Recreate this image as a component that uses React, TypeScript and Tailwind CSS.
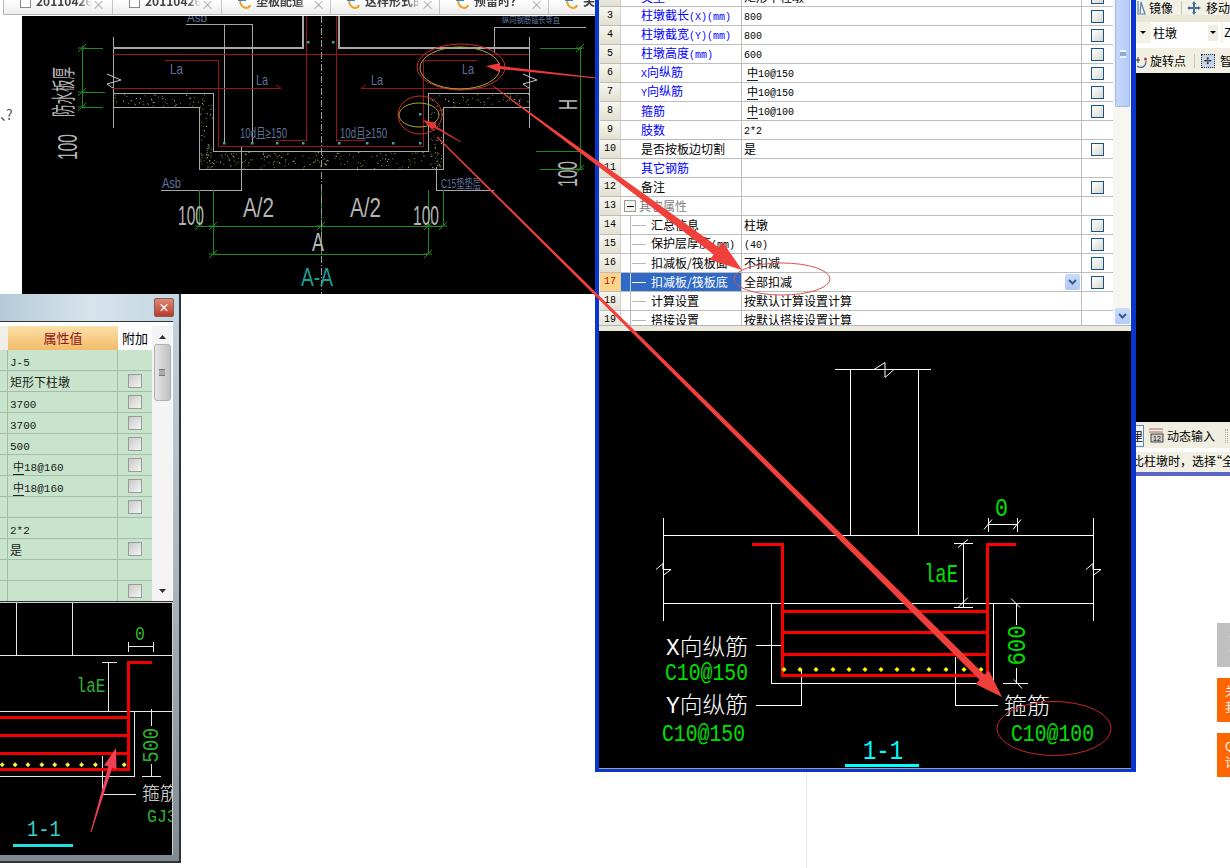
import React from "react";

const CJK = "font-['Noto_Sans_CJK_SC','Noto_Sans',sans-serif]";

function arrow(x1: number, y1: number, x2: number, y2: number, w1: number, w2: number, hl: number, hw: number) {
  const len = Math.hypot(x2 - x1, y2 - y1);
  const ux = (x2 - x1) / len;
  const uy = (y2 - y1) / len;
  const nx = -uy;
  const ny = ux;
  const bx = x2 - ux * hl;
  const by = y2 - uy * hl;
  const p = (x: number, y: number) => `${x.toFixed(1)},${y.toFixed(1)}`;
  return [
    p(x1 + (nx * w1) / 2, y1 + (ny * w1) / 2),
    p(bx + (nx * w2) / 2, by + (ny * w2) / 2),
    p(bx + (nx * hw) / 2, by + (ny * hw) / 2),
    p(x2, y2),
    p(bx - (nx * hw) / 2, by - (ny * hw) / 2),
    p(bx - (nx * w2) / 2, by - (ny * w2) / 2),
    p(x1 - (nx * w1) / 2, y1 - (ny * w1) / 2),
  ].join(" ");
}

function speckles() {
  const areas = [
    [113, 94, 86, 12],
    [200, 94, 12, 75],
    [200, 152, 243, 16],
    [429, 94, 13, 75],
    [443, 94, 86, 12],
  ];
  const out: [number, number][] = [];
  let s = 17;
  const r = () => {
    s = (s * 16807) % 2147483647;
    return (s % 1000) / 1000;
  };
  areas.forEach(([x, y, w, h]) => {
    const n = Math.round((w * h) / 22);
    for (let i = 0; i < n; i++) out.push([x + r() * w, y + r() * h]);
  });
  return out;
}

const T = ({ x, y, s, w, c, f, tr, children }: { x: number; y: number; s: number; w?: number; c: string; f?: "sans" | "mono" | "cjk"; tr?: string; children: React.ReactNode }) => (
  <text
    x={x}
    y={y}
    fontSize={s}
    fill={c}
    transform={tr}
    textLength={w}
    lengthAdjust={w ? "spacingAndGlyphs" : undefined}
    fontWeight={f === "cjk" ? 300 : 400}
    fontFamily={
      f === "mono"
        ? "'Liberation Mono','Noto Sans CJK SC',monospace"
        : f === "sans"
          ? "'Liberation Sans','Noto Sans CJK SC',sans-serif"
          : "'Liberation Mono','Noto Sans CJK SC',serif"
    }
  >
    {children}
  </text>
);

function Tick({ x, y, c }: { x: number; y: number; c: string }) {
  return <path d={`M${x - 4} ${y + 4}L${x + 4} ${y - 4}M${x - 4} ${y}H${x + 4}`} stroke={c} fill="none" />;
}

function TopDrawing() {
  const gray = "#a8a8a8";
  const dred = "#98161a";
  const green = "#1d8a1d";
  const slate = "#5f7098";
  const light = "#b4b4b4";
  return (
    <svg className="block w-full h-full" viewBox="22 16 574 278">
      <g opacity="0.95">
        {speckles().map(([x, y], i) => (
          <rect key={i} x={x} y={y} width="1" height="1" fill={i % 4 ? "#8c8c34" : "#d8d8d8"} />
        ))}
      </g>
      <g fill="none" stroke={gray} shapeRendering="crispEdges">
        <path d="M186 24H252V143M224.5 24V143" />
        <path d="M303 16V48H113M339 16V48H529" strokeWidth="1.5" />
        <path d="M113 37V128M529 37V128" />
        <path d="M113 93H213V151H428V93H529M113 107H199V169H443V107H529" />
        <path d="M161 190H241V147M494 190H436V167" />
        <path d="M586 27H494V53" />
      </g>
      <path d="M107 74L121 80L107 84L113 88M523 74L537 80L523 84L529 88" fill="none" stroke="#c8c8c8" />
      <g fill="none" stroke={dred} shapeRendering="crispEdges">
        <path d="M113 54H529" />
        <path d="M306 16V140H276M336 16V140H365" />
        <path d="M165 60H218V146H423V60H477" />
        <path d="M113 88H281M361 88H529" />
      </g>
      <path d="M276 85L281 88M366 85L361 88" stroke={dred} fill="none" />
      <g stroke={green} fill="none" shapeRendering="crispEdges">
        <path d="M82 46V108M82 48H103M82 92H105M82 107H103" />
        <path d="M580 48V170M540 48H582M536 151H580M540 169H582" />
        <path d="M199 190V226M213 190V254M321 189V254M428 190V254M443 190V226M199 226H443M213 254H428" />
      </g>
      {[[82, 48], [82, 92], [82, 107], [580, 48], [580, 169], [199, 226], [213, 226], [321, 226], [428, 226], [443, 226], [213, 254], [428, 254]].map(([x, y], i) => (
        <Tick key={i} x={x} y={y} c={green} />
      ))}
      <path d="M321 16V294" stroke="#9a9a9a" strokeDasharray="7 2 1 2" fill="none" shapeRendering="crispEdges" />
      {[[224, 143], [252, 143], [277, 143], [303, 143], [339, 143], [367, 143], [393, 143], [420, 143], [308, 42], [333, 42], [420, 114]].map(([x, y], i) => (
        <rect key={i} x={x - 1} y={y - 1} width="2.5" height="2.5" fill="#35a8a8" />
      ))}
      <T f="sans" x={187} y={22} s={12} w={20} c={slate}>Asb</T>
      <T f="sans" x={162} y={188} s={15} w={19} c={slate}>Asb</T>
      <T f="sans" x={170} y={74} s={15} w={13} c={slate}>La</T>
      <T f="sans" x={256} y={85} s={15} w={12} c={slate}>La</T>
      <T f="sans" x={371} y={85} s={15} w={12} c={slate}>La</T>
      <T f="sans" x={462} y={74} s={15} w={12} c={slate}>La</T>
      <T f="sans" x={240} y={138} s={14} w={47} c={slate}>10d且≥150</T>
      <T f="sans" x={340} y={138} s={14} w={47} c={slate}>10d且≥150</T>
      <T f="sans" x={441} y={188} s={13} w={40} c={slate}>C15垫垫层</T>
      <T f="sans" x={502} y={23} s={9} w={58} c={slate}>纵向钢筋锚长等直</T>
      <T f="sans" x={178} y={225} s={28} w={26} c={light}>100</T>
      <T f="sans" x={413} y={225} s={28} w={26} c={light}>100</T>
      <T f="sans" x={243} y={217} s={28} w={31} c={light}>A/2</T>
      <T f="sans" x={350} y={217} s={28} w={31} c={light}>A/2</T>
      <T f="sans" x={312} y={251} s={26} w={12} c={light}>A</T>
      <T f="sans" x={301} y={286} s={25} w={32} c="#1f9d93">A-A</T>
      <T f="sans" x={0} y={0} s={28} w={26} c={light} tr="translate(77,160) rotate(-90)">100</T>
      <T f="sans" x={0} y={0} s={24} w={50} c={light} tr="translate(72,117) rotate(-90)">防水板厚</T>
      <T f="sans" x={0} y={0} s={26} w={11} c={light} tr="translate(577,110) rotate(-90)">H</T>
      <T f="sans" x={0} y={0} s={28} w={26} c={light} tr="translate(577,187) rotate(-90)">100</T>
      <ellipse cx="461" cy="67" rx="44" ry="23" fill="none" stroke="#d62a2a" />
      <ellipse cx="460" cy="68" rx="40" ry="21" fill="none" stroke="#a8a83a" />
      <ellipse cx="420" cy="115" rx="22" ry="19" fill="none" stroke="#d62a2a" />
      <ellipse cx="419" cy="115" rx="20" ry="12" fill="none" stroke="#a8a83a" />
    </svg>
  );
}

function RightDrawing() {
  const w = "#ffffff";
  const g = "#00e000";
  const diamonds = [784, 800, 816, 833, 849, 865, 881, 897, 913, 929, 946, 964, 981];
  return (
    <svg className="block w-full h-full" viewBox="599 332 532 436">
      <g fill="none" stroke={w} shapeRendering="crispEdges">
        <path d="M835 370H931M850 370V536M918 370V536" />
        <path d="M663 536H1093M663 604H1093M663 518V621M1093 518V621" />
        <path d="M771 604V684H993V604" />
        <path d="M756 646H781M756 706H801V670M998 706H955V657" />
        <path d="M963 544V608M954 544H973M954 608H973" />
        <path d="M988 525H1017M988 518V532M1017 518V532" />
        <path d="M1016 604V625M1016 668V684M1003 684H1028" />
      </g>
      <g fill="none" stroke={w}>
        <path d="M874 370L885 363V378L894 370" />
        <path d="M656 570L663 564V570H671L663 576M1086 570L1093 564V570H1101L1093 576" />
        <path d="M1011 599L1020 608M1014 680L1022 689M958 548L968 540M958 608L968 598M984 530L992 520M1013 530L1021 520" />
      </g>
      <g stroke="#ff0000" fill="none" shapeRendering="crispEdges">
        <path d="M752 544.5H782V676H987V544.5H1016" strokeWidth="3" />
        <path d="M782 612H987M782 633H987M782 655H987" strokeWidth="3" />
      </g>
      {diamonds.map((x) => (
        <path key={x} d={`M${x} 667.5L${x + 2.5} 670L${x} 672.5L${x - 2.5} 670Z`} fill="#ffff00" />
      ))}
      <T f="mono" x={924} y={582} s={25} w={34} c={g}>laE</T>
      <T f="mono" x={995} y={516} s={25} w={13} c={g}>0</T>
      <T f="mono" x={0} y={0} s={26} w={40} c={g} tr="translate(1025,666) rotate(-90)">600</T>
      <T f="cjk" x={666} y={655} s={23} w={82} c={w}>X向纵筋</T>
      <T f="mono" x={665} y={680} s={24} w={83} c={g}>C10@150</T>
      <T f="cjk" x={666} y={713} s={23} w={82} c={w}>Y向纵筋</T>
      <T f="mono" x={662} y={741} s={24} w={83} c={g}>C10@150</T>
      <T f="cjk" x={1004} y={714} s={23} w={46} c={w}>箍筋</T>
      <T f="mono" x={1011} y={741} s={24} w={83} c={g}>C10@100</T>
      <T f="mono" x={863} y={759} s={28} w={40} c="#00ffff">1-1</T>
      <path d="M845 766H919" stroke="#00ffff" strokeWidth="3" shapeRendering="crispEdges" />
      <ellipse cx="1054" cy="729" rx="57" ry="27" fill="none" stroke="#c62828" />
    </svg>
  );
}

function LeftDrawing() {
  const w = "#e8e8e8";
  const g = "#2fb02f";
  const dia = [2, 15, 28, 42, 55, 68, 82, 96, 110, 125];
  return (
    <svg className="block w-full h-full" viewBox="0 603 173 254">
      <g fill="none" stroke={w} shapeRendering="crispEdges">
        <path d="M16 603V656M73 603V656M0 656H173M0 712H173" />
        <path d="M0 778H135V712M103 757V796H137" />
        <path d="M109 663V713M103 663H118M103 712H112" />
        <path d="M129 647H155M129 642V652M155 642V652" />
        <path d="M153 710V727M153 765V778M143 778H162" />
      </g>
      <g stroke="#f00000" fill="none" strokeWidth="3" shapeRendering="crispEdges">
        <path d="M153 663H129V771H0M0 718H129M0 737H129M0 755H129" />
      </g>
      {dia.map((x) => (
        <path key={x} d={`M${x} 763.5L${x + 2.5} 766L${x} 768.5L${x - 2.5} 766Z`} fill="#ffee44" />
      ))}
      <T f="mono" x={77} y={693} s={20} w={29} c={g}>laE</T>
      <T f="mono" x={136} y={640} s={20} w={10} c={g}>0</T>
      <T f="mono" x={0} y={0} s={22} w={35} c={g} tr="translate(159,764) rotate(-90)">500</T>
      <T f="cjk" x={143} y={802} s={18} w={36} c={w}>箍筋</T>
      <T f="mono" x={148} y={824} s={19} w={30} c={g}>GJ3</T>
      <T f="mono" x={27} y={838} s={23} w={34} c="#36d0c8">1-1</T>
      <path d="M13 847H73" stroke="#20e0e0" strokeWidth="3" shapeRendering="crispEdges" />
    </svg>
  );
}

function Check({ soft }: { soft?: boolean }) {
  return soft ? (
    <span className="block w-[14px] h-[14px] border border-[#9a9a9a] bg-gradient-to-br from-[#c8c8c8] to-[#f6f6f6]" />
  ) : (
    <span className="block w-[13px] h-[13px] border border-[#1c5180] bg-gradient-to-br from-white to-[#d8d8d0]" />
  );
}

const Num = ({ children }: { children: React.ReactNode }) => (
  <span className="font-['Liberation_Mono',monospace] text-[10px]">{children}</span>
);

const BigNum = ({ children }: { children: React.ReactNode }) => (
  <span className="font-['Liberation_Mono',monospace] text-[11px]">{children}</span>
);

type Row = { n: number; name: React.ReactNode; value?: React.ReactNode; check?: boolean; blue?: boolean; tree?: boolean; gray?: boolean; group?: boolean; sel?: boolean };

const steel = (v: string) => (
  <span className="pl-[3px]">
    <span className="text-[11px] leading-none border-b border-[#222]">中</span>
    <Num>{v}</Num>
  </span>
);

const rows: Row[] = [
  { n: 2, name: "类型", value: "矩形下柱墩", check: true, blue: true },
  { n: 3, name: <>柱墩截长<Num>(X)(mm)</Num></>, value: <Num>800</Num>, check: true, blue: true },
  { n: 4, name: <>柱墩截宽<Num>(Y)(mm)</Num></>, value: <Num>800</Num>, check: true, blue: true },
  { n: 5, name: <>柱墩高度<Num>(mm)</Num></>, value: <Num>600</Num>, check: true, blue: true },
  { n: 6, name: <><Num>X</Num>向纵筋</>, value: steel("10@150"), check: true, blue: true },
  { n: 7, name: <><Num>Y</Num>向纵筋</>, value: steel("10@150"), check: true, blue: true },
  { n: 8, name: "箍筋", value: steel("10@100"), check: true, blue: true },
  { n: 9, name: "肢数", value: <Num>2*2</Num>, blue: true },
  { n: 10, name: "是否按板边切割", value: "是", check: true },
  { n: 11, name: "其它钢筋", blue: true },
  { n: 12, name: "备注", check: true },
  { n: 13, name: "其它属性", gray: true, group: true },
  { n: 14, name: "汇总信息", value: "柱墩", check: true, tree: true },
  { n: 15, name: <>保护层厚度<Num>(mm)</Num></>, value: <Num>(40)</Num>, check: true, tree: true },
  { n: 16, name: "扣减板/筏板面", value: "不扣减", check: true, tree: true },
  { n: 17, name: "扣减板/筏板底", value: "全部扣减", check: true, tree: true, sel: true },
  { n: 18, name: "计算设置", value: "按默认计算设置计算", tree: true },
  { n: 19, name: "搭接设置", value: "按默认搭接设置计算", tree: true },
];

function PropertyRow({ r }: { r: Row }) {
  const color = r.sel ? "text-white" : r.blue ? "text-[#0000ff]" : r.gray ? "text-[#808080]" : "text-black";
  return (
    <div className="flex h-[19px] border-b border-[#bdbdbd] text-[12px] leading-[18px] text-black">
      <div className={`w-[21px] shrink-0 text-center font-['Liberation_Mono',monospace] text-[10px] border-r border-[#d4d0c8] ${r.sel ? "bg-[#ffd48a] text-[#a02000]" : "bg-gradient-to-b from-[#f8f7f0] to-[#e2e0d0]"}`}>{r.n}</div>
      <div className={`w-[121px] shrink-0 flex items-center border-r border-[#bdbdbd] overflow-hidden whitespace-nowrap ${r.sel ? "bg-[#316ac5]" : "bg-white"} ${color}`}>
        {r.group && (
          <span className="ml-[3px] mr-[3px] w-[12px] h-[12px] border border-[#9a9a9a] bg-[#f4f4ee] flex items-center justify-center shrink-0">
            <span className="block w-[7px] h-[1px] bg-black" />
          </span>
        )}
        {r.tree && (
          <span className={`ml-[9px] mr-[5px] w-[16px] h-[18px] flex items-center shrink-0 border-l ${r.sel ? "border-[#c8d8f0]" : "border-[#b8b8b8]"}`}>
            <span className={`block w-[14px] h-[1px] ml-[1px] ${r.sel ? "bg-white" : "bg-[#b8b8b8]"}`} />
          </span>
        )}
        <span className={r.group ? "" : r.tree ? "" : "ml-[20px]"}>{r.name}</span>
      </div>
      <div className="w-[340px] shrink-0 flex items-center justify-between pl-[2px] pr-[1px] border-r border-[#bdbdbd] whitespace-nowrap">
        <span>{r.value}</span>
        {r.sel && (
          <span className="w-[15px] h-[16px] rounded-[2px] bg-gradient-to-b from-[#c9dafc] to-[#b0c8f6] flex items-center justify-center">
            <svg width="9" height="6" viewBox="0 0 9 6"><path d="M1 1L4.5 4.5L8 1" fill="none" stroke="#3d5a8a" strokeWidth="2" /></svg>
          </span>
        )}
      </div>
      <div className="w-[31px] shrink-0 flex items-center justify-center">{r.check && <Check />}</div>
    </div>
  );
}

function RightWindow() {
  return (
    <div className={`absolute left-[595px] top-0 w-[541px] h-[772px] flex flex-col border-l-[4px] border-r-[5px] border-b-[3px] border-x-[#0a36d0] border-b-[#0a36d0] bg-[#ece9d8] ${CJK}`}>
      <div className="h-[326px] shrink-0 flex overflow-hidden bg-white border-b border-[#a9b7c9]">
        <div className="w-[1px] shrink-0 bg-[#ece9d8]" />
        <div className="w-[513px] shrink-0 -mt-[12px]">
          {rows.map((r) => (
            <PropertyRow key={r.n} r={r} />
          ))}
        </div>
        <div className="w-[18px] shrink-0 flex flex-col justify-between bg-[#f7f6f0] pl-[2px] pr-[1px] pb-[1px]">
          <div className="h-[108px] rounded-b-[2px] border-b border-x border-[#9fb8e8] bg-gradient-to-r from-[#c6d6f8] to-[#b6ccf6] flex items-center justify-center -mt-[1px] pt-[2px]">
            <span className="block w-[6px] h-[8px] border-y-2 border-[#eef3ff] bg-[#8ca8dc]" />
          </div>
          <div className="h-[16px] rounded-[2px] bg-gradient-to-b from-[#cddcfc] to-[#b4caf6] flex items-center justify-center">
            <svg width="9" height="6" viewBox="0 0 9 6"><path d="M1 1L4.5 4.5L8 1" fill="none" stroke="#3d5a8a" strokeWidth="2" /></svg>
          </div>
        </div>
      </div>
      <div className="h-[5px] shrink-0 bg-[#ece9d8]" />
      <div className="flex-1 min-h-0 bg-black border-b border-[#a0a0a0]"><RightDrawing /></div>
    </div>
  );
}

function LeftWindow() {
  const bigSteel = (v: string) => (
    <span className="pl-[3px]">
      <span className="text-[11px] leading-none border-b border-[#222]">中</span>
      <BigNum>{v}</BigNum>
    </span>
  );
  const data: [React.ReactNode, boolean][] = [
    [<BigNum key="j">J-5</BigNum>, false],
    ["矩形下柱墩", true],
    [<BigNum key="a">3700</BigNum>, true],
    [<BigNum key="b">3700</BigNum>, true],
    [<BigNum key="c">500</BigNum>, true],
    [bigSteel("18@160"), true],
    [bigSteel("18@160"), true],
    ["", true],
    [<BigNum key="d">2*2</BigNum>, false],
    ["是", true],
    ["", false],
    ["", true],
  ];
  return (
    <div className={`absolute left-0 top-[294px] w-[181px] h-[569px] flex flex-col pr-[6px] pb-[6px] bg-gradient-to-b from-[#c2d3df] via-[#aab6bf] to-[#7f8992] border-r-2 border-b-2 border-[#2e3338] ${CJK}`}>
      <div className="h-[27px] shrink-0 -mr-[6px] bg-gradient-to-r from-[#b4cad8] via-[#d7e4ec] to-[#c2d6e3] flex items-center justify-end pr-[5px]">
        <span className="w-[20px] h-[19px] rounded-[2px] bg-gradient-to-b from-[#dd8a78] to-[#b83a28] border border-[#8f5a52] flex items-center justify-center text-white text-[11px] leading-none font-bold">×</span>
      </div>
      <div className="h-[281px] shrink-0 flex bg-white border-y border-[#333] overflow-hidden pt-[4px]">
        <div className="w-[152px] shrink-0">
          <div className="flex h-[24px] text-[13px] leading-[24px]">
            <div className="w-[8px] bg-[#f0efea]" />
            <div className="w-[110px] text-center text-[#8b1420] bg-gradient-to-b from-[#fbe0a8] to-[#f2bb68]">属性值</div>
            <div className="w-[34px] text-center text-black bg-white">附加</div>
          </div>
          {data.map(([v, c], i) => (
            <div key={i} className="flex h-[21px] bg-[#c9e4cc] border-b border-[#a5bda8] text-[12px] leading-[21px] text-[#1a1a1a]">
              <div className="w-[8px] border-r border-[#a5bda8]" />
              <div className="w-[110px] pl-[2px] border-r border-[#a5bda8] whitespace-nowrap">{v}</div>
              <div className="w-[34px] flex items-center justify-center">{c && <Check soft />}</div>
            </div>
          ))}
        </div>
        <div className="w-[20px] shrink-0 flex flex-col items-center bg-[#f4f4f4] py-[3px]">
          <svg width="7" height="4" viewBox="0 0 7 4" className="mt-[6px]"><path d="M3.5 0L7 4H0Z" fill="#333" /></svg>
          <div className="w-[17px] h-[57px] mt-[5px] rounded-[3px] border border-[#b0b0b0] bg-gradient-to-r from-[#e6e6e6] to-[#c0c0c0] flex items-center justify-center">
            <span className="block w-[6px] h-[7px] border-y border-[#777] bg-[#aaa]" />
          </div>
          <svg width="7" height="4" viewBox="0 0 7 4" className="mt-auto mb-[5px]"><path d="M3.5 4L7 0H0Z" fill="#333" /></svg>
        </div>
      </div>
      <div className="flex-1 min-h-0 bg-black border-r border-t border-[#d0d0d0]"><LeftDrawing /></div>
    </div>
  );
}

function TabIcon() {
  return (
    <svg width="13" height="10" viewBox="0 0 13 10" className="shrink-0">
      <path d="M2 0C2 5 5 8 8 8C10 8 11.5 7 12 5" fill="none" stroke="#f0a020" strokeWidth="2" />
      <path d="M0 0H8" stroke="#2f86d8" strokeWidth="2" />
    </svg>
  );
}

function Tabs() {
  const items = [
    { icon: false, t: "20110426" },
    { icon: false, t: "20110426" },
    { icon: true, t: "垫板配道_" },
    { icon: true, t: "这样形式的" },
    { icon: true, t: "预留时？" },
    { icon: true, t: "关" },
  ];
  return (
    <div className={`absolute left-[3px] top-0 w-[592px] h-[15px] flex overflow-hidden bg-[#f4f4f4] border-l border-b border-[#b5b5b5] ${CJK}`}>
      {items.map((it, i) => (
        <div key={i} className="w-[109px] h-[14px] shrink-0 border-r border-[#c5c5c5] bg-gradient-to-b from-[#ffffff] to-[#ececec] flex items-start gap-[5px] pl-[16px] overflow-hidden">
          {it.icon ? (
            <TabIcon />
          ) : (
            <span className="block w-[11px] h-[8px] shrink-0 border border-t-0 border-[#8a8a8a] bg-white" />
          )}
          <span className="w-[56px] shrink-0 overflow-hidden whitespace-nowrap text-[12px] leading-[12px] -mt-[5px] text-[#444] font-bold [mask-image:linear-gradient(90deg,#000_75%,transparent)]">{it.t}</span>
          <span className="text-[13px] leading-[10px] -mt-[1px] -ml-[5px] text-[#aaa]">×</span>
        </div>
      ))}
    </div>
  );
}

function ToolbarsTop() {
  return (
    <div className={`absolute left-[1136px] top-0 w-[94px] h-[73px] flex flex-col bg-[#f3f1e6] text-[12px] text-black overflow-hidden ${CJK}`}>
      <div className="h-[15px] shrink-0 flex items-center overflow-hidden leading-[15px]">
        <svg width="10" height="14" viewBox="0 0 10 14" className="ml-[1px] shrink-0"><path d="M1 0V14M3 13L8 13L4 1Z" fill="none" stroke="#5a7fb2" strokeWidth="1.2" /></svg>
        <span className="ml-[2px] whitespace-nowrap">镜像</span>
        <span className="ml-[8px] w-[1px] h-[14px] bg-[#c9c6b5] shrink-0" />
        <svg width="14" height="14" viewBox="0 0 14 14" className="ml-[5px] shrink-0"><path d="M7 0L9 3H8V6H11V5L14 7L11 9V8H8V11H9L7 14L5 11H6V8H3V9L0 7L3 5V6H6V3H5Z" fill="#4a6d9c" /></svg>
        <span className="ml-[5px] whitespace-nowrap">移动</span>
      </div>
      <div className="h-[7px] shrink-0 bg-[#e9e6d6]" />
      <div className="h-[21px] shrink-0 flex items-stretch">
        <span className="w-[13px] shrink-0 flex items-center justify-center"><span className="border-x-[3px] border-x-transparent border-t-[3px] border-t-black" /></span>
        <span className="ml-[2px] w-[70px] shrink-0 bg-white flex items-center justify-between pl-[2px] pr-[3px]">
          柱墩
          <span className="w-[10px] h-[16px] bg-[#f0eee2] flex items-center justify-center"><span className="border-x-[3px] border-x-transparent border-t-[3px] border-t-black" /></span>
        </span>
        <span className="ml-[2px] flex-1 bg-white pl-[1px] leading-[20px]">Z</span>
      </div>
      <div className="h-[5px] shrink-0 bg-white" />
      <div className="h-[25px] shrink-0 flex items-center bg-[#f1efe2] overflow-hidden">
        <svg width="11" height="18" viewBox="0 0 11 18" className="shrink-0"><path d="M1 14C5 17 10 15 10 9" fill="none" stroke="#44689c" strokeWidth="1.2" /><circle cx="9.5" cy="7" r="1.5" fill="#c43a3a" /><path d="M2 5V11M0 8H4" stroke="#333" /></svg>
        <span className="ml-[3px] whitespace-nowrap">旋转点</span>
        <span className="ml-[8px] w-[1px] h-[14px] bg-[#c9c6b5] shrink-0" />
        <span className="ml-[6px] w-[14px] h-[14px] shrink-0 border border-dotted border-[#333] bg-[#c5d3e8] flex items-center justify-center text-[9px] leading-none">✢</span>
        <span className="ml-[5px] whitespace-nowrap">智</span>
      </div>
    </div>
  );
}

function ToolbarsBottom() {
  return (
    <div className={`absolute left-[1136px] top-[422px] w-[94px] h-[54px] flex flex-col text-[12px] text-black overflow-hidden bg-white ${CJK}`}>
      <div className="h-[26px] shrink-0 flex items-center bg-[#f0eee1] pt-[1px]">
        <span className="w-[8px] h-[22px] shrink-0 border border-l-0 border-[#5c8acb] bg-[#f5f5ef] overflow-hidden text-[11px] leading-[20px] flex justify-end">里</span>
        <svg width="16" height="15" viewBox="0 0 16 15" className="ml-[4px] shrink-0"><path d="M1 1H15M1 4H15" stroke="#b06a6a" /><rect x="3" y="6" width="12" height="8" fill="#cfcfc6" stroke="#444" /><text x="5" y="13" fontSize="7" fontFamily="'Liberation Sans',sans-serif" fill="#111">12</text></svg>
        <span className="ml-[3px] whitespace-nowrap">动态输入</span>
        <span className="ml-[10px] w-[3px] h-[14px] shrink-0 border-x border-dotted border-[#aaa]" />
      </div>
      <div className="h-[4px] shrink-0 bg-white" />
      <div className="h-[20px] shrink-0 bg-[#f2f0e4] whitespace-nowrap leading-[18px] -ml-[4px]">比柱墩时，选择<span className="-ml-[6px]">“</span>全</div>
      <div className="h-[4px] shrink-0 bg-[#5a66c6]" />
    </div>
  );
}

export default function App() {
  return (
    <div className={`relative w-[1230px] h-[868px] overflow-hidden bg-white ${CJK}`}>
      <Tabs />
      <div className="absolute left-0 top-[106px] text-[14px] leading-[16px] text-[#555] tracking-[-8px]">、?</div>
      <div className="absolute left-[22px] top-[16px] w-[574px] h-[278px] bg-black"><TopDrawing /></div>
      <LeftWindow />
      <RightWindow />
      <ToolbarsTop />
      <div className="absolute left-[1136px] top-[73px] w-[94px] h-[349px] bg-black" />
      <ToolbarsBottom />
      <div className="absolute left-[806px] top-[772px] w-[1px] h-[96px] bg-[#e8e8e8]" />
      <div className="absolute left-[1217px] top-[623px] w-[13px] flex flex-col gap-[11px]">
        <div className="h-[44px] bg-[#c0c0c0] text-white text-[12px] leading-[14px] pt-[7px] whitespace-nowrap overflow-hidden pl-[8px]">·<br />·</div>
        <div className="h-[44px] bg-[#ff6600] text-white text-[12px] leading-[16px] pt-[5px] whitespace-nowrap overflow-hidden pl-[8px]">关<br />我</div>
        <div className="h-[44px] bg-[#ff6600] text-white text-[12px] leading-[16px] pt-[5px] whitespace-nowrap overflow-hidden pl-[8px]">Q<br />论</div>
      </div>
      <svg className="absolute left-0 top-0 w-[1230px] h-[868px] pointer-events-none" viewBox="0 0 1230 868">
        <ellipse cx="782" cy="279" rx="48" ry="16" fill="none" stroke="#d9534f" />
        <polygon points={arrow(596, 78, 486, 66, 0.8, 3, 14, 9)} fill="#f03a3a" />
        <polygon points={arrow(493, 86, 742, 270, 0.6, 9, 32, 22)} fill="#f0403c" />
        <polygon points={arrow(461, 142, 423, 120, 0.6, 2.2, 13, 8)} fill="#e83434" />
        <polygon points={arrow(437, 137, 1002, 697, 1, 7, 28, 19)} fill="#f0403c" />
        <polygon points={arrow(91, 832, 116, 748, 1, 4, 20, 13)} fill="#f04058" />
      </svg>
    </div>
  );
}
